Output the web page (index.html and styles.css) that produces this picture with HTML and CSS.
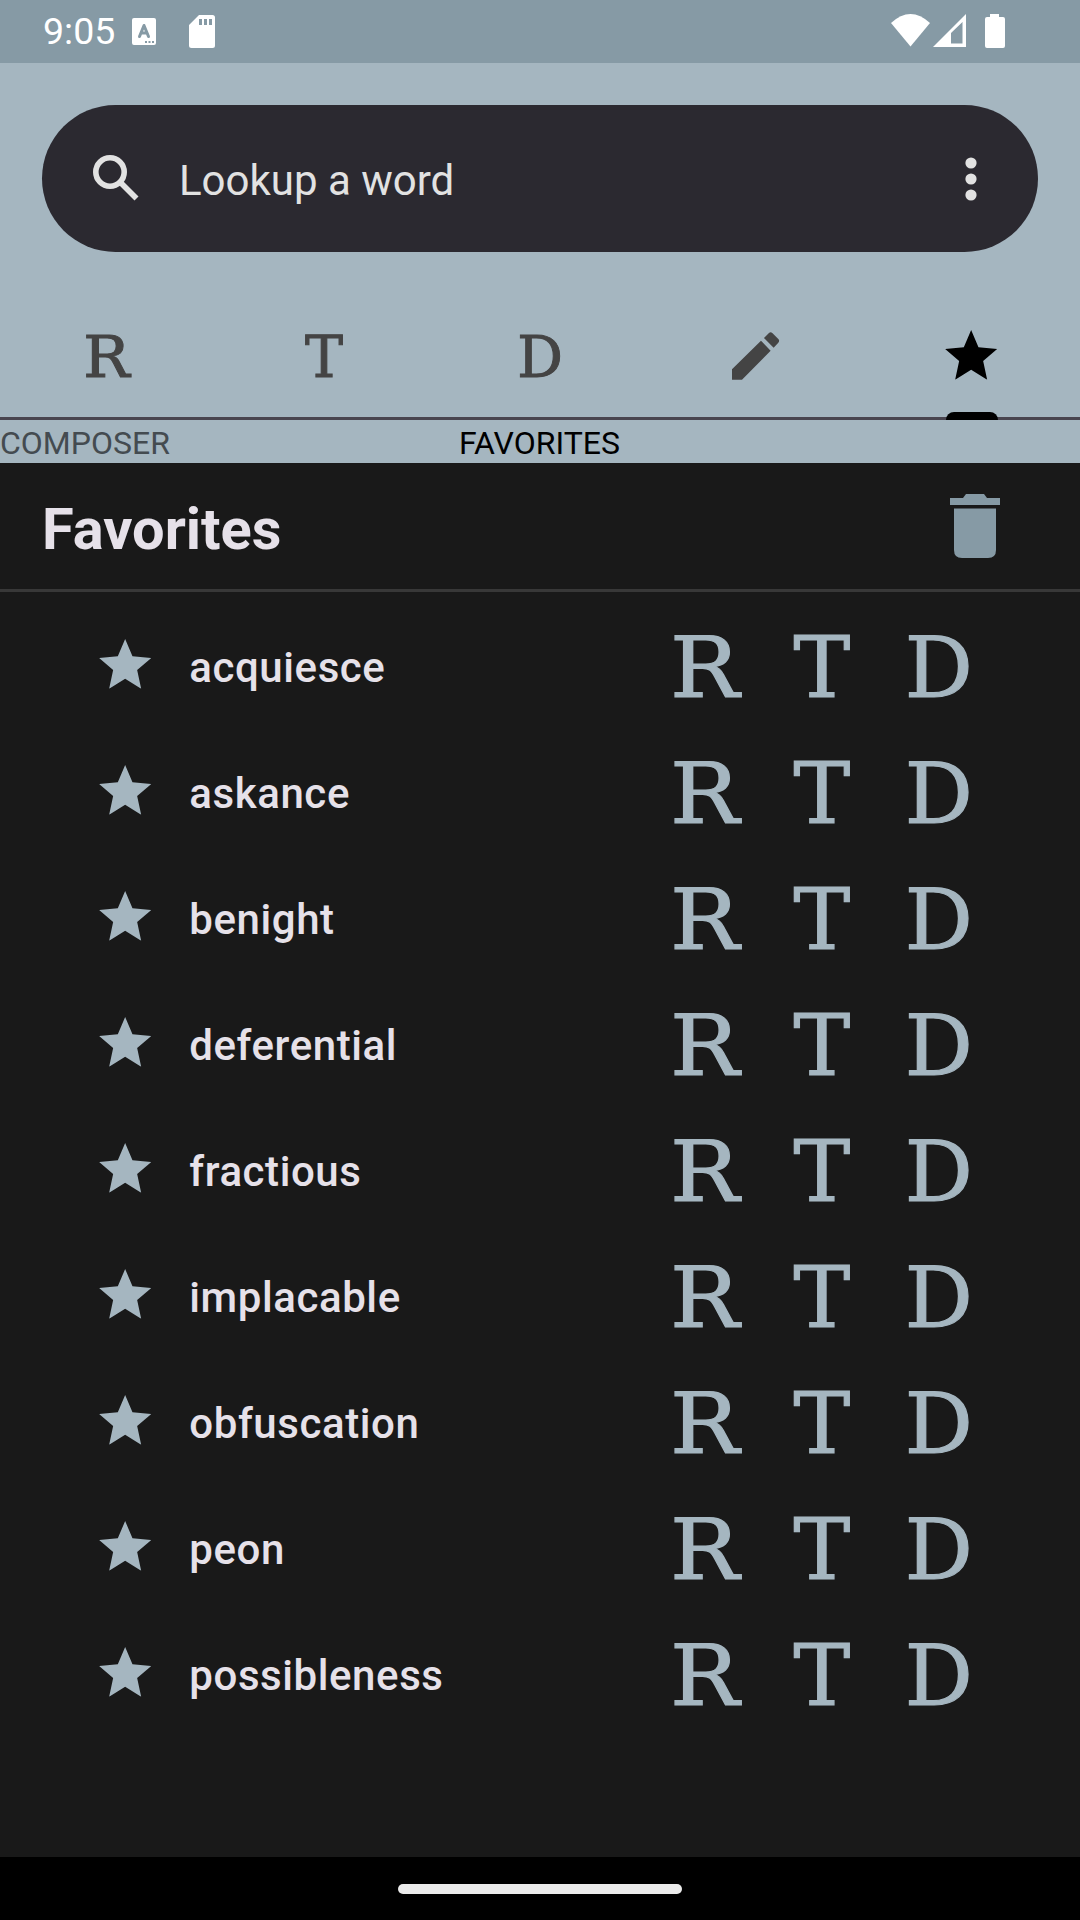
FILE: index.html
```html
<!DOCTYPE html>
<html lang="en">
<head>
<meta charset="utf-8">
<title>Favorites</title>
<link rel="stylesheet" href="styles.css">
</head>
<body>
<svg class="defs" aria-hidden="true">
  <symbol id="star" viewBox="0 0 156 149"><path d="M78 0L100 52L156 57L114 93L126 149L78 119L30 149L42 93L0 57L56 52Z"/></symbol>
</svg>
<header class="status">
  <span class="clock">9:05</span>
  <svg class="kbd" viewBox="0 0 24 27"><path fill-rule="evenodd" d="M2 0H22Q24 0 24 2V25Q24 27 22 27H2Q0 27 0 25V2Q0 0 2 0ZM13 23V25H15V23ZM16.500 23V25H18.500V23ZM20 23V25H22V23Z"/><path class="cut" d="M7.500 18.500L12 7.500L16.500 18.500M9 15H15"/></svg>
  <svg class="sd" viewBox="0 0 26 33"><path fill-rule="evenodd" d="M10 0H23.500Q26 0 26 2.500V30.500Q26 33 23.500 33H2.500Q0 33 0 30.500V10ZM10 4V10H13V4ZM15 4V10H18V4ZM20 4V10H23V4Z"/></svg>
  <svg class="signals" viewBox="0 0 114 34"><path d="M0 9Q19.500 -9 39 9L19.500 32.500Z"/><path fill-rule="evenodd" d="M42 33L75 0V33ZM60 19V29.500H71.500V8Z"/><path d="M99 0H108V3H112Q114 3 114 5V32Q114 34 112 34H96Q94 34 94 32V5Q94 3 96 3H99Z"/></svg>
</header>
<section class="top">
  <div class="search">
    <svg class="lens" viewBox="0 0 46 46"><circle cx="17" cy="17" r="14.200"/><path d="M27.500 27.500L43.500 43.500"/></svg>
    <span class="hint">Lookup a word</span>
    <svg class="more" viewBox="0 0 12 44"><circle cx="6" cy="6" r="5.600"/><circle cx="6" cy="22" r="5.600"/><circle cx="6" cy="38" r="5.600"/></svg>
  </div>
  <nav class="tabs">
    <span class="tab letter r">R</span>
    <span class="tab letter t">T</span>
    <span class="tab letter d">D</span>
    <span class="tab"><svg class="pencil" viewBox="0 0 142 143"><path d="M0 112L87 26L116 56L30 143H0ZM96 18L111 3Q116 -2 121 3L139 21Q144 26 139 32L125 47Z"/></svg></span>
    <span class="tab active"><svg class="star"><use href="#star"/></svg></span>
  </nav>
  <div class="titles"><span class="prev">COMPOSER</span><span class="current">FAVORITES</span></div>
</section>
<main>
  <div class="heading">
    <h1>Favorites</h1>
    <svg class="trash" viewBox="0 0 50 64"><path d="M0 4H13L16 0H34L37 4H50V11H0ZM4 14.500H46V56Q46 64 38 64H12Q4 64 4 56Z"/></svg>
  </div>
  <ul class="list">
    <li><svg class="star"><use href="#star"/></svg><span class="word">acquiesce</span><span class="letter r">R</span><span class="letter t">T</span><span class="letter d">D</span></li>
    <li><svg class="star"><use href="#star"/></svg><span class="word">askance</span><span class="letter r">R</span><span class="letter t">T</span><span class="letter d">D</span></li>
    <li><svg class="star"><use href="#star"/></svg><span class="word">benight</span><span class="letter r">R</span><span class="letter t">T</span><span class="letter d">D</span></li>
    <li><svg class="star"><use href="#star"/></svg><span class="word">deferential</span><span class="letter r">R</span><span class="letter t">T</span><span class="letter d">D</span></li>
    <li><svg class="star"><use href="#star"/></svg><span class="word">fractious</span><span class="letter r">R</span><span class="letter t">T</span><span class="letter d">D</span></li>
    <li><svg class="star"><use href="#star"/></svg><span class="word">implacable</span><span class="letter r">R</span><span class="letter t">T</span><span class="letter d">D</span></li>
    <li><svg class="star"><use href="#star"/></svg><span class="word">obfuscation</span><span class="letter r">R</span><span class="letter t">T</span><span class="letter d">D</span></li>
    <li><svg class="star"><use href="#star"/></svg><span class="word">peon</span><span class="letter r">R</span><span class="letter t">T</span><span class="letter d">D</span></li>
    <li><svg class="star"><use href="#star"/></svg><span class="word">possibleness</span><span class="letter r">R</span><span class="letter t">T</span><span class="letter d">D</span></li>
  </ul>
</main>
<footer><div class="handle"></div></footer>
</body>
</html>
```
FILE: styles.css
```css
* { box-sizing: border-box; }
body {
  margin: 0;
  width: 1080px;
  height: 1920px;
  overflow: hidden;
  display: flex;
  flex-direction: column;
  font-family: Roboto, "Liberation Sans", sans-serif;
  background: #191919;
  color: #e6e1e9;
}
svg { display: block; flex: none; fill: currentColor; }
.defs { position: absolute; width: 0; height: 0; }

.status {
  height: 63px;
  flex: none;
  display: flex;
  padding-left: 43px;
  background: #869aa5;
  color: #fff;
}
.clock { width: 89px; font-size: 37.500px; line-height: 63px; }
.kbd { width: 24px; height: 27px; margin-top: 18px; }
.kbd .cut { fill: none; stroke: #869aa5; stroke-width: 3; stroke-linejoin: round; stroke-linecap: round; }
.sd { width: 26px; height: 33px; margin: 15px 0 0 33px; }
.signals { width: 114px; height: 34px; margin: 14px 75px 0 auto; }

.top { height: 400px; flex: none; display: flex; flex-direction: column; padding-top: 42px; background: #a5b6c0; }
.search {
  height: 147px;
  flex: none;
  margin: 0 42px;
  padding: 0 61.500px 0 51px;
  display: flex;
  align-items: center;
  border-radius: 74px;
  background: #2b2930;
  color: #e2e2e2;
}
.lens { width: 46px; height: 46px; margin-bottom: 2px; fill: none; stroke: currentColor; stroke-width: 5.600; }
.hint { margin: 4px auto 0 40px; font-size: 42px; }
.more { width: 12px; height: 44px; }

.tabs {
  height: 126px;
  flex: none;
  margin-top: 42px;
  display: grid;
  grid-template-columns: repeat(5, 1fr);
  border-bottom: 3px solid #49454f;
  color: #444;
}
.tabs .tab { display: flex; justify-content: center; padding-top: 38px; position: relative; }
.tabs .letter { font-size: 57px; line-height: 58px; padding-top: 34px; -webkit-text-stroke: 1px; }
.tabs .r { padding-right: 3px; }
.pencil { width: 47.300px; height: 47.700px; }
.active { color: #000; }
.tabs .active { padding: 36px 1px 0 0; }
.active::after {
  content: "";
  position: absolute;
  left: 82px;
  bottom: -3px;
  width: 52px;
  height: 8px;
  border-radius: 8px 8px 0 0;
  background: #000;
}
.titles { display: grid; grid-template-columns: 1fr auto 1fr; font-size: 32px; line-height: 46px; }
.prev { color: #444b50; }
.current { color: #000; margin-left: -1px; }

main { flex: 1; }
.heading {
  height: 129px;
  display: flex;
  justify-content: space-between;
  padding: 0 80px 0 42px;
  border-bottom: 3px solid #383838;
}
h1 { margin: 0; font-size: 57.750px; line-height: 132px; font-weight: 700; }
.trash { width: 50px; height: 64px; margin-top: 31px; color: #869aa5; }
.list { list-style: none; margin: 0; padding: 11px 0 0; }
.list li { height: 126px; display: flex; align-items: center; padding-left: 99px; color: #a5b6c0; }
.star { width: 52.300px; height: 49.700px; }
.list .star { margin-bottom: 4px; }
.word { width: 457px; margin: 2px 0 0 38px; color: #e6e1e9; font-size: 42px; font-weight: 500; letter-spacing: .58px; }
.letter { font-family: "DejaVu Serif", serif; text-align: center; }
.list .letter { width: 117px; height: 126px; font-size: 85px; line-height: 130px; -webkit-text-stroke: 1.200px; }
.letter.r { transform: scaleX(1.08); }

footer { height: 63px; flex: none; display: flex; background: #000; }
.handle { width: 284px; height: 10px; margin: 27px auto 0; border-radius: 5px; background: #ebebeb; }
```
